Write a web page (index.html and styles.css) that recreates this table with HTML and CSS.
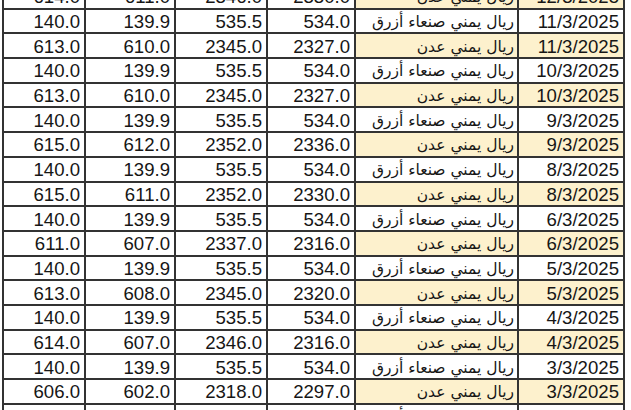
FILE: index.html
```html
<!DOCTYPE html>
<html lang="ar">
<head>
<meta charset="utf-8">
<title>أسعار الصرف</title>
<link rel="stylesheet" href="styles.css">
</head>
<body>
<div class="sheet">
<table class="rates">
<colgroup>
<col class="c-num1"><col class="c-num2"><col class="c-num3"><col class="c-num4"><col class="c-name"><col class="c-date">
</colgroup>
<tbody>
<tr class="aden"><td>614.0</td><td>611.0</td><td>2346.0</td><td>2330.0</td><td class="name" dir="rtl">ريال يمني عدن</td><td class="date">12/3/2025</td></tr>
<tr><td>140.0</td><td>139.9</td><td>535.5</td><td>534.0</td><td class="name" dir="rtl">ريال يمني صنعاء أزرق</td><td class="date">11/3/2025</td></tr>
<tr class="aden"><td>613.0</td><td>610.0</td><td>2345.0</td><td>2327.0</td><td class="name" dir="rtl">ريال يمني عدن</td><td class="date">11/3/2025</td></tr>
<tr><td>140.0</td><td>139.9</td><td>535.5</td><td>534.0</td><td class="name" dir="rtl">ريال يمني صنعاء أزرق</td><td class="date">10/3/2025</td></tr>
<tr class="aden"><td>613.0</td><td>610.0</td><td>2345.0</td><td>2327.0</td><td class="name" dir="rtl">ريال يمني عدن</td><td class="date">10/3/2025</td></tr>
<tr><td>140.0</td><td>139.9</td><td>535.5</td><td>534.0</td><td class="name" dir="rtl">ريال يمني صنعاء أزرق</td><td class="date">9/3/2025</td></tr>
<tr class="aden"><td>615.0</td><td>612.0</td><td>2352.0</td><td>2336.0</td><td class="name" dir="rtl">ريال يمني عدن</td><td class="date">9/3/2025</td></tr>
<tr><td>140.0</td><td>139.9</td><td>535.5</td><td>534.0</td><td class="name" dir="rtl">ريال يمني صنعاء أزرق</td><td class="date">8/3/2025</td></tr>
<tr class="aden"><td>615.0</td><td>611.0</td><td>2352.0</td><td>2330.0</td><td class="name" dir="rtl">ريال يمني عدن</td><td class="date">8/3/2025</td></tr>
<tr><td>140.0</td><td>139.9</td><td>535.5</td><td>534.0</td><td class="name" dir="rtl">ريال يمني صنعاء أزرق</td><td class="date">6/3/2025</td></tr>
<tr class="aden"><td>611.0</td><td>607.0</td><td>2337.0</td><td>2316.0</td><td class="name" dir="rtl">ريال يمني عدن</td><td class="date">6/3/2025</td></tr>
<tr><td>140.0</td><td>139.9</td><td>535.5</td><td>534.0</td><td class="name" dir="rtl">ريال يمني صنعاء أزرق</td><td class="date">5/3/2025</td></tr>
<tr class="aden"><td>613.0</td><td>608.0</td><td>2345.0</td><td>2320.0</td><td class="name" dir="rtl">ريال يمني عدن</td><td class="date">5/3/2025</td></tr>
<tr><td>140.0</td><td>139.9</td><td>535.5</td><td>534.0</td><td class="name" dir="rtl">ريال يمني صنعاء أزرق</td><td class="date">4/3/2025</td></tr>
<tr class="aden"><td>614.0</td><td>607.0</td><td>2346.0</td><td>2316.0</td><td class="name" dir="rtl">ريال يمني عدن</td><td class="date">4/3/2025</td></tr>
<tr><td>140.0</td><td>139.9</td><td>535.5</td><td>534.0</td><td class="name" dir="rtl">ريال يمني صنعاء أزرق</td><td class="date">3/3/2025</td></tr>
<tr class="aden"><td>606.0</td><td>602.0</td><td>2318.0</td><td>2297.0</td><td class="name" dir="rtl">ريال يمني عدن</td><td class="date">3/3/2025</td></tr>
<tr><td>140.0</td><td>139.9</td><td>535.5</td><td>534.0</td><td class="name" dir="rtl">ريال يمني صنعاء أزرق</td><td class="date">2/3/2025</td></tr>
</tbody>
</table>
</div>
</body>
</html>
```
FILE: styles.css
```css
html, body {
  margin: 0;
  padding: 0;
  background: #ffffff;
  overflow: hidden;
}
.sheet {
  width: 631px;
  height: 410px;
  overflow: hidden;
}
.rates {
  margin: -17px 0 0 2px;
  width: 623px;
  table-layout: fixed;
  border-collapse: collapse;
  font-family: "Liberation Sans", Arial, "DejaVu Sans", sans-serif;
  font-size: 18.6px;
  color: #161616;
}
.c-num1 { width: 82px; }
.c-num2 { width: 90px; }
.c-num3 { width: 92px; }
.c-num4 { width: 88px; }
.c-name { width: 163px; }
.c-date { width: 106px; }
.rates tr {
  height: 24.7px;
}
.rates td {
  border: 2px solid #333333;
  padding: 2px 4px 0 4px;
  text-align: right;
  vertical-align: middle;
  white-space: nowrap;
  overflow: hidden;
  line-height: 20px;
}
.rates td.name {
  text-align: right;
  font-family: "DejaVu Sans", sans-serif;
  font-size: 15.5px;
  padding-right: 3px;
}
.rates tr.aden td.name,
.rates tr.aden td.date {
  background: #fdf1cd;
}
```
